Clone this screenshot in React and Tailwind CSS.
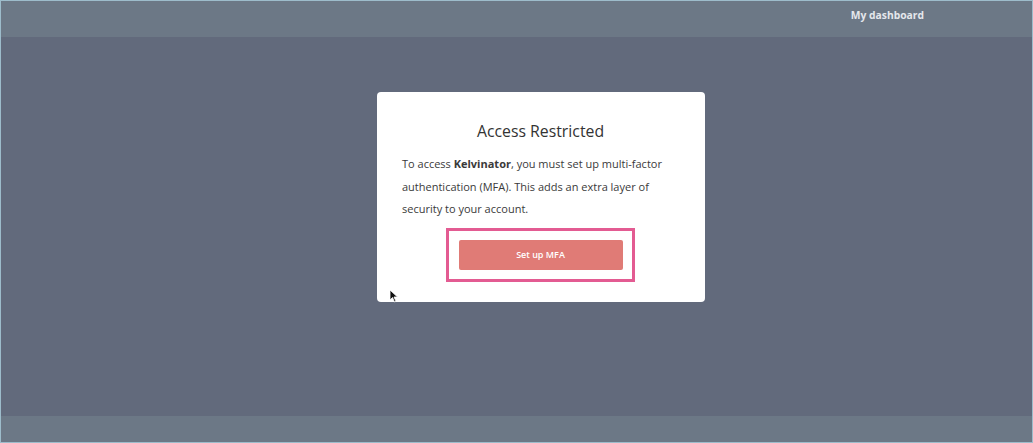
export default function App() {
  return (
    <div className="w-[1033px] h-[443px] border border-[#9dbccb] flex flex-col overflow-hidden" style={{ fontFamily: '"Open Sans", sans-serif' }}>
      <header className="h-[36px] bg-[#6c7886] flex items-start justify-end pr-[108px] shrink-0">
        <span className="mt-[7px] text-[10.3px] font-bold text-[#e4e7ec]">My dashboard</span>
      </header>
      <main className="flex-1 bg-[#626a7c] flex justify-center relative pl-[48px]">
        <div className="mt-[55px] w-[328px] h-[210px] bg-white rounded-[4px] flex flex-col items-center relative">
          <h1 className="mt-[27px] text-[15.8px] text-[#333] leading-[24px]">Access Restricted</h1>
          <p className="mt-[10px] w-[277px] text-[11px] leading-[22.5px] text-[#3a3a3a]">
            To access <b className="font-bold">Kelvinator</b>, you must set up multi-factor authentication (MFA). This adds an extra layer of security to your account.
          </p>
          <div className="mt-[7px] w-[189px] h-[54px] border-[3px] border-[#e35b92] flex items-center justify-center">
            <button className="w-[164px] h-[30px] bg-[#e07b76] rounded-[2px] text-white text-[9px] font-semibold">Set up MFA</button>
          </div>
          <svg className="absolute left-[12px] top-[197px]" width="10" height="14" viewBox="0 0 10 14">
            <path d="M1 1 L1 11 L3.5 8.5 L5.5 13 L7 12.3 L5 8 L8.5 8 Z" fill="#111" stroke="#fff" strokeWidth="0.8" />
          </svg>
        </div>
      </main>
      <footer className="h-[26px] bg-[#6c7886] shrink-0" />
    </div>
  );
}
